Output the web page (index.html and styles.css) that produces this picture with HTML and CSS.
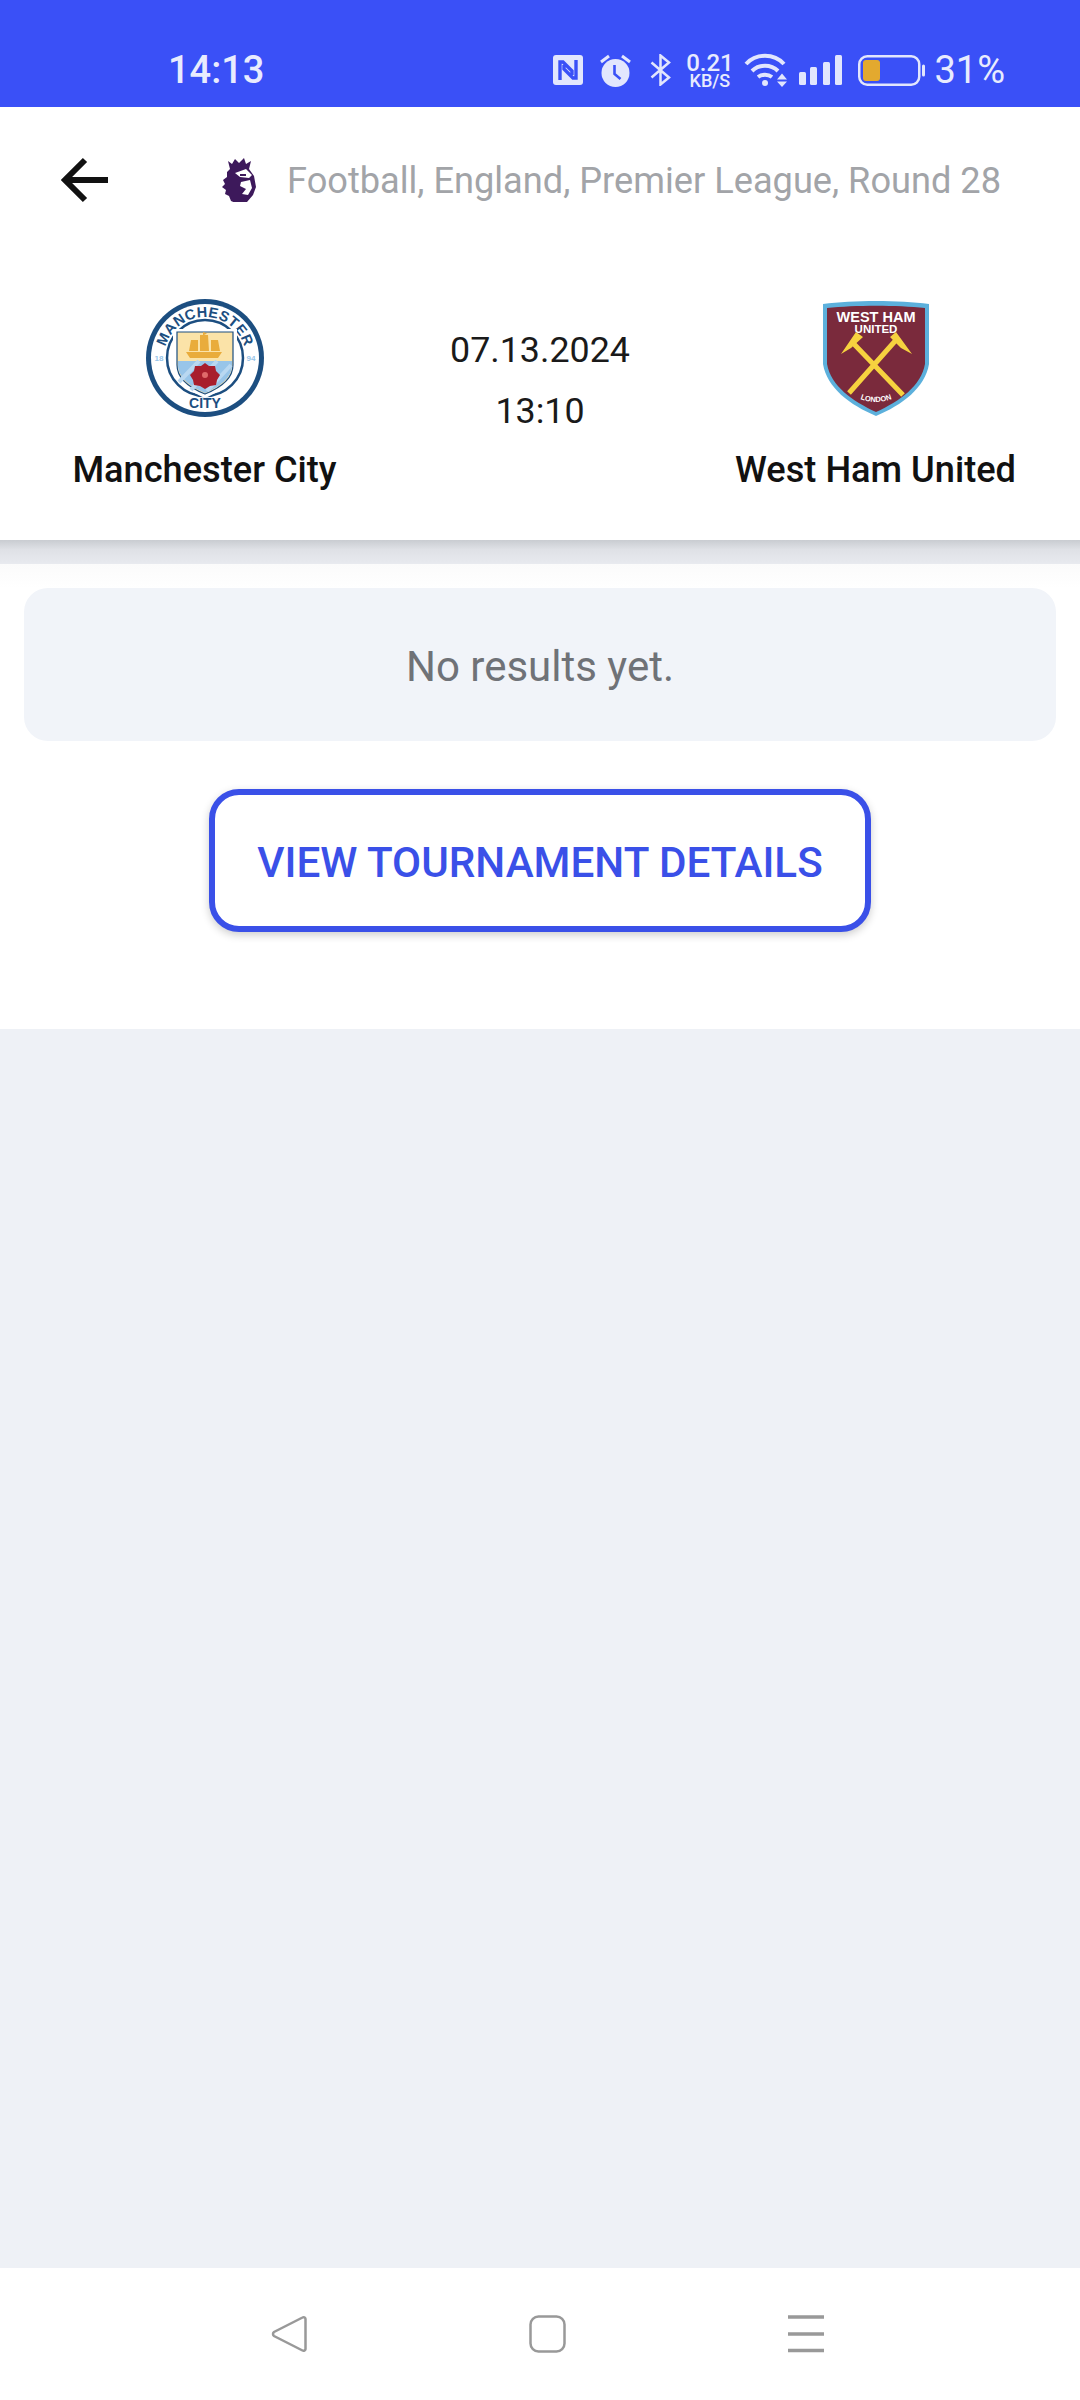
FILE: index.html
```html
<!DOCTYPE html>
<html lang="en">
  <head>
    <meta charset="utf-8" />
    <title>Manchester City - West Ham United</title>
    <link rel="stylesheet" href="styles.css">
  </head>
  <body>
    <div class="status-bar">
      <span class="clock">14:13</span>
      <div class="status-icons">
        <svg class="ic-nfc" width="30" height="30" viewBox="0 0 30 30"><rect width="30" height="30" rx="3" fill="#e2e6fd"/><path d="M7 25V7h3l9 9v4M23 5v18h-3l-9-9v-4" fill="none" stroke="#3a50f7" stroke-width="3.400"/></svg>
        <svg class="ic-alarm" width="31" height="34" viewBox="0 0 31 34"><circle cx="15.500" cy="20" r="14" fill="#e2e6fd"/><path d="M14.500 12v9l6 5" fill="none" stroke="#3a50f7" stroke-width="2.600"/><path d="M1 9l8-6M30 9l-8-6" stroke="#e2e6fd" stroke-width="3" fill="none"/></svg>
        <svg class="ic-bt" width="21" height="32" viewBox="0 0 21 32"><path d="M1.500 8.500L19 23.500 10.500 30.500V1.500L19 8.500 1.500 23.500" fill="none" stroke="#e2e6fd" stroke-width="2.500"/></svg>
        <div class="speed"><span class="speed-num">0.21</span><span class="speed-unit">KB/S</span></div>
        <svg class="ic-wifi" width="44" height="34" viewBox="0 0 44 34"><path d="M2 11C12 0 30 0 40 11M8 18c7-7 19-7 26 0M14 24c4-3 10-3 14 0" fill="none" stroke="#e2e6fd" stroke-width="4"/><circle cx="21" cy="30" r="3" fill="#e2e6fd"/><path d="M33 26.500h10l-5-6zM33 28.500h10l-5 5.500z" fill="#e2e6fd"/></svg>
        <svg class="ic-signal" width="43" height="30" viewBox="0 0 43 30"><g fill="#e2e6fd"><rect y="17" width="7" height="13" rx="1.500"/><rect x="11" y="12" width="7" height="18" rx="1.500"/><rect x="24" y="7" width="7" height="23" rx="1.500"/><rect x="36" width="7" height="30" rx="1.500"/></g></svg>
        <svg class="ic-batt" width="67" height="31" viewBox="0 0 67 31"><rect x="1.250" y="1.250" width="60" height="28.500" rx="8" fill="none" stroke="#e2e6fd" stroke-width="2.500"/><rect x="5" y="5" width="17" height="21" rx="3" fill="#e3a92f"/><rect x="64" y="9.500" width="3" height="12" rx="1.500" fill="#e2e6fd"/></svg>
        <span class="batt-pct">31%</span>
      </div>
    </div>

    <div class="match-head">
      <div class="top-row">
        <svg class="back" width="50" height="46" viewBox="0 0 50 46"><path d="M49 23H6M26 3L6 23l20 20" fill="none" stroke="#111" stroke-width="6"/></svg>
        <svg class="pl-logo" width="36" height="44" viewBox="0 0 36 44">
          <path fill="#3d195b" d="M9 11L7 3l4 3 3-5 4 4 5-5 2 6 5-3-2 8 5 7 2 11-3 8-6 7-9 2-7-3-2-5-4-2 1-4-4-3 3-3-2-4 4-3 0-5z"/>
          <path fill="#fff" d="M14 15l11-4 6 6-3 3-9-1zM20 24l9-2 2 8-4 7-6-1 4-5-6-3z"/>
          <path fill="#3d195b" d="M19 16h6v2h-6z"/>
        </svg>
        <span class="crumb">Football, England, Premier League, Round 28</span>
      </div>
      <div class="teams">
        <div class="team">
          <svg class="crest" width="120" height="120" viewBox="0 0 120 120">
            <circle cx="60" cy="60" r="59" fill="#1c4e80"/>
            <circle cx="60" cy="60" r="54" fill="#fff"/>
            <circle cx="60" cy="60" r="38" fill="none" stroke="#1c4e80" stroke-width="2.500"/>
            <path id="mc-arc" d="M19 60a41 41 0 0 1 82 0" fill="none"/>
            <text class="mc-text"><textPath href="#mc-arc" startOffset="50%" text-anchor="middle">MANCHESTER</textPath></text>
            <text class="mc-city" x="60" y="110" text-anchor="middle">CITY</text>
            <text class="mc-year" x="14" y="63" text-anchor="middle">18</text>
            <text class="mc-year" x="106" y="63" text-anchor="middle">94</text>
            <path fill="#fff" d="M28 31h64v36c0 16-16 26-32 33-16-7-32-17-32-33z"/>
            <path fill="#fbe3a8" stroke="#1c4e80" stroke-width="1.200" d="M32 34h56v33c0 14-13 23-28 29-15-6-28-15-28-29z"/>
            <path fill="#98c5e9" d="M33 63h54v4c0 13-13 22-27 28-14-6-27-15-27-28z"/>
            <path d="M34 84l20-21M46 92l26-29M62 93l24-26" stroke="#b9d8f1" stroke-width="4" fill="none"/>
            <path fill="#e9ac3c" d="M44 53l2-11h7v11zM55 53V37h8l1 16zM66 53V42h7l2 11zM41 54h36l-4 6H45zM58 37v-3l4 1.500-3 1.500z"/>
            <path fill="#a81e2c" d="M60 65l4 3 6 0 1 5 4 4-3 5-1 5-6 1-5 3-5-3-6-1-1-5-3-5 4-4 1-5 6 0z"/>
            <circle cx="60" cy="77" r="3" fill="#e06a6a"/>
          </svg>
          <span class="team-name">Manchester City</span>
        </div>
        <div class="match-time">
          <span>07.13.2024</span>
          <span>13:10</span>
        </div>
        <div class="team">
          <svg class="crest" width="120" height="120" viewBox="0 0 120 120">
            <path fill="#5cb0dc" d="M7 6c30-4 76-4 106 0v60c-4 24-27 41-53 52C34 107 11 90 7 66z"/>
            <path fill="#7a2a3c" d="M11 10c28-3 70-3 98 0v56c-4 22-25 37-49 48C36 103 15 88 11 66z"/>
            <text class="wh-top" x="60" y="24" text-anchor="middle">WEST HAM</text>
            <text class="wh-mid" x="60" y="35" text-anchor="middle">UNITED</text>
            <path d="M37 45l50 52M80 42L33 95" stroke="#f6d23f" stroke-width="5" fill="none"/>
            <path fill="#f6d23f" d="M25 56l15-22 7 5-12 11zM96 56L80 34l-6 5 11 11z"/>
            <path id="wh-arc" d="M38 98Q60 110 82 98" fill="none"/>
            <text class="wh-low"><textPath href="#wh-arc" startOffset="50%" text-anchor="middle">LONDON</textPath></text>
          </svg>
          <span class="team-name">West Ham United</span>
        </div>
      </div>
    </div>

    <div class="head-shadow"></div>

    <div class="content">
      <div class="no-results">No results yet.</div>
      <a class="details-btn">VIEW TOURNAMENT DETAILS</a>
    </div>

    <div class="filler"></div>

    <div class="nav-bar">
      <svg width="36" height="38" viewBox="0 0 36 38"><path d="M31.500 2.500a2 2 0 0 1 3 1.500v30a2 2 0 0 1-3 1.500L3 21a2.500 2.500 0 0 1 0-4z" fill="none" stroke="#999" stroke-width="2.500"/></svg>
      <svg width="37" height="38" viewBox="0 0 37 38"><rect x="1.500" y="1.500" width="34" height="35" rx="8" fill="none" stroke="#999" stroke-width="2.500"/></svg>
      <svg width="36" height="38" viewBox="0 0 36 38"><path d="M0 2h36M0 19h36M0 35.500h36" fill="none" stroke="#999" stroke-width="3.500"/></svg>
    </div>
  </body>
</html>
```

FILE: styles.css
```css
* {
  box-sizing: border-box;
}
body {
  margin: 0;
  width: 1080px;
  height: 2400px;
  display: flex;
  flex-direction: column;
  background: #fff;
  font-family: Roboto, "Liberation Sans", sans-serif;
}

/* status bar */
.status-bar {
  height: 107px;
  flex: none;
  background: #3a50f7;
  color: #e8ebfe;
  display: flex;
  align-items: center;
  justify-content: space-between;
  padding: 33px 75px 0 168px;
}
.clock {
  font-size: 38px;
  font-weight: 500;
}
.status-icons {
  display: flex;
  align-items: center;
}
.ic-alarm {
  margin-left: 17px;
}
.ic-bt {
  margin-left: 19px;
}
.speed {
  margin-left: 16px;
  width: 45px;
  display: flex;
  flex-direction: column;
  align-items: center;
  font-weight: 500;
}
.speed-num {
  font-size: 24px;
  line-height: 20px;
}
.speed-unit {
  font-size: 18px;
  line-height: 15px;
}
.ic-wifi {
  margin-left: 12px;
}
.ic-signal {
  margin-left: 11px;
}
.ic-batt {
  margin-left: 16px;
}
.batt-pct {
  margin-left: 9px;
  font-size: 38px;
}

/* match header */
.match-head {
  height: 433px;
  flex: none;
  background: #fff;
}
.top-row {
  display: flex;
  align-items: center;
  height: 146px;
  padding: 0 0 0 59px;
}
.pl-logo {
  margin-left: 112px;
}
.crumb {
  margin-left: 30px;
  font-size: 36.200px;
  color: #a2a4a8;
}
.teams {
  display: grid;
  grid-template-columns: 409px 262px 409px;
  padding-top: 45px;
}
.team {
  display: flex;
  flex-direction: column;
  align-items: center;
  gap: 28px;
}
.team-name {
  font-size: 36.200px;
  font-weight: 500;
  line-height: 48px;
  color: #111;
  white-space: nowrap;
}
.match-time {
  display: flex;
  flex-direction: column;
  align-items: center;
  gap: 19px;
  padding-top: 31px;
  font-size: 35.800px;
  line-height: 42px;
  color: #1a1a1a;
}
.crest text {
  font-family: "Liberation Sans", sans-serif;
  font-weight: 700;
}
.mc-text {
  font-size: 14.500px;
  letter-spacing: 0.4px;
  fill: #1c4e80;
}
.mc-city {
  font-size: 14px;
  fill: #1c4e80;
}
.mc-year {
  font-size: 8px;
  fill: #98c5e9;
}
.wh-top {
  font-size: 14.500px;
  fill: #fff;
}
.wh-mid {
  font-size: 11.500px;
  fill: #fff;
}
.wh-low {
  font-size: 7.500px;
  fill: #fff;
}
.head-shadow {
  height: 24px;
  flex: none;
  background: linear-gradient(#c9ccd1, #dfe1e6 40%, #e8eaef);
}

/* result area */
.content {
  height: 465px;
  flex: none;
  background: linear-gradient(#fbfbfb, #fff 24px);
  padding: 24px 24px 0;
  display: flex;
  flex-direction: column;
  align-items: center;
}
.no-results {
  width: 100%;
  height: 153px;
  padding-top: 4px;
  border-radius: 24px;
  background: #f1f4f9;
  color: #6f7277;
  font-size: 42px;
  display: flex;
  align-items: center;
  justify-content: center;
}
.details-btn {
  margin-top: 48px;
  width: 662px;
  height: 143px;
  padding-top: 3px;
  border: 6px solid #3a50e8;
  border-radius: 30px;
  box-shadow: 0 3px 8px rgba(0, 0, 0, 0.2);
  color: #3a50e8;
  font-size: 42.200px;
  font-weight: 500;
  display: flex;
  align-items: center;
  justify-content: center;
  background: #fff;
}
.filler {
  flex: 1;
  background: #eef1f6;
}

/* navigation */
.nav-bar {
  height: 132px;
  flex: none;
  background: #fff;
  display: flex;
  align-items: center;
  justify-content: space-between;
  padding: 0 256px 0 271px;
}
```
